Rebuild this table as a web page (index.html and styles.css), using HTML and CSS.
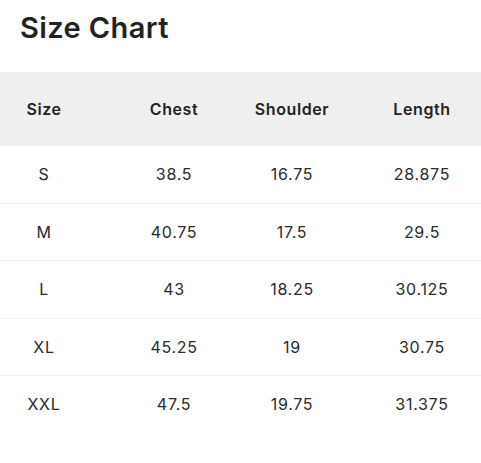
FILE: index.html
```html
<!DOCTYPE html>
<html>
<head>
<meta charset="utf-8">
<link rel="stylesheet" href="styles.css">
</head>
<body>
<div class="page">
  <h1 class="title">Size Chart</h1>
  <table class="chart">
    <colgroup>
      <col class="c1"><col class="c2"><col class="c3"><col class="c4">
    </colgroup>
    <thead>
      <tr><th>Size</th><th class="p2">Chest</th><th>Shoulder</th><th class="p4">Length</th></tr>
    </thead>
    <tbody>
      <tr><td>S</td><td class="p2">38.5</td><td>16.75</td><td class="p4">28.875</td></tr>
      <tr><td>M</td><td class="p2">40.75</td><td>17.5</td><td class="p4">29.5</td></tr>
      <tr><td>L</td><td class="p2">43</td><td>18.25</td><td class="p4">30.125</td></tr>
      <tr><td>XL</td><td class="p2">45.25</td><td>19</td><td class="p4">30.75</td></tr>
      <tr><td>XXL</td><td class="p2">47.5</td><td>19.75</td><td class="p4">31.375</td></tr>
    </tbody>
  </table>
</div>
</body>
</html>
```

FILE: styles.css
```css
html, body {
  margin: 0;
  padding: 0;
  background: #ffffff;
}
.page {
  font-family: Inter, "Noto Sans", sans-serif;
  color: #222222;
  width: 481px;
}
.title {
  margin: 0;
  padding: 10px 0 0 20px;
  height: 72px;
  box-sizing: border-box;
  font-size: 29px;
  font-weight: 600;
  letter-spacing: 0.4px;
  line-height: 36px;
  color: #222222;
}
.chart {
  width: 481px;
  border-collapse: collapse;
  table-layout: fixed;
}
.c1 { width: 88px; }
.c2 { width: 152px; }
.c3 { width: 104px; }
.c4 { width: 137px; }
.chart th {
  background: #efefef;
  height: 74px;
  padding: 0;
  font-size: 16px;
  font-weight: 600;
  letter-spacing: 0.6px;
  text-align: center;
  color: #222222;
}
.chart td {
  height: 56.5px;
  padding: 0;
  font-size: 16px;
  font-weight: 400;
  letter-spacing: 0.7px;
  text-align: center;
  color: #2a2a2a;
  border-bottom: 1px solid #f0f0f0;
}
.chart tbody tr:last-child td {
  border-bottom: none;
}
.chart .p2 { padding-left: 20px; }
.chart .p4 { padding-left: 19px; }
```
